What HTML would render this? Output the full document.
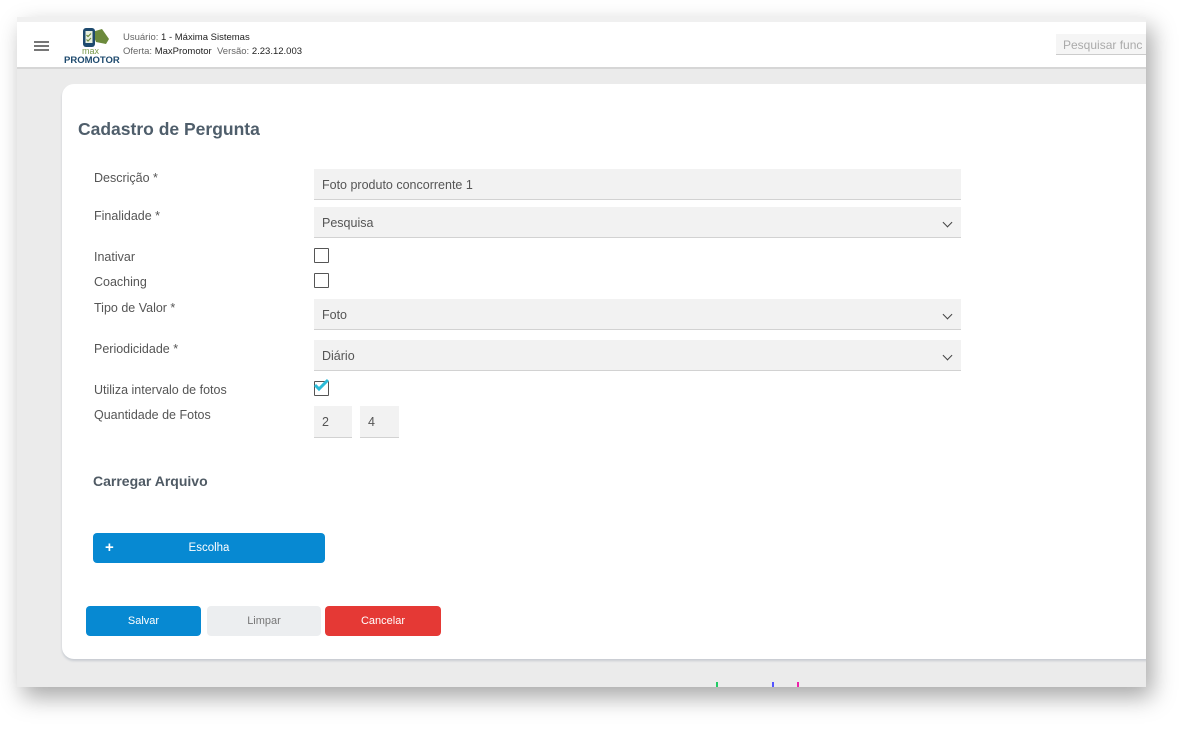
<!DOCTYPE html>
<html><head><meta charset="utf-8"><style>
*{box-sizing:border-box;margin:0;padding:0}
body{width:1196px;height:736px;background:#fff;font-family:"Liberation Sans",sans-serif;position:relative;overflow:hidden}
.shot{position:absolute;left:17px;top:17px;width:1129px;height:670px;background:#ebebeb;box-shadow:6px 10px 22px rgba(0,0,0,.35);overflow:hidden}
.hdr{position:absolute;left:0;top:5px;width:1129px;height:47px;background:#fff;border-bottom:2px solid #d6d6d6}
.topstrip{position:absolute;left:0;top:0;width:1129px;height:5px;background:#f0f0f0}
.card{position:absolute;left:45px;top:67px;width:1100px;height:575px;background:#fff;border-radius:12px;box-shadow:0 2px 2px #c8ccd2}
.abs{position:absolute}
.lbl{position:absolute;left:77px;font-size:12.5px;color:#555}
.inp{position:absolute;left:297px;width:647px;height:31px;background:#f2f2f2;border-bottom:1px solid #d2d2d2;font-size:12.5px;color:#555;padding:9px 0 0 8px}
.chev{position:absolute;right:10px;top:12px;width:7px;height:7px;border-right:1.6px solid #444;border-bottom:1.6px solid #444;transform:rotate(45deg)}
.cb{position:absolute;left:297px;width:15px;height:15px;border:1.6px solid #555;border-radius:1px}
.btn{position:absolute;height:30px;border-radius:4px;font-size:11px;color:#fff;text-align:center;line-height:30px}
</style></head><body>
<div class="shot">
 <div class="topstrip"></div>
 <div class="hdr">
  <div class="abs" style="left:17px;top:19px;width:15px;height:1.5px;background:#777;box-shadow:0 4px 0 #777,0 8px 0 #777"></div>
  <svg class="abs" style="left:63px;top:5px" width="30" height="22" viewBox="0 0 30 22"><path d="M12 5 L22 2 L29 12 L26 17 L16 15Z" fill="#6c8a3c"/><rect x="3" y="1" width="12" height="19" rx="3" fill="#1e4a6e"/><rect x="5.5" y="4" width="7" height="12" fill="#e8f0e0"/><path d="M6.5 8l1.5 1.5 3-3M6.5 12.5l1.5 1.5 3-3" stroke="#6c8a3c" stroke-width="1.2" fill="none"/></svg>
  <div class="abs" style="left:65px;top:24px;font-size:9px;color:#7a9a4a">max</div>
  <div class="abs" style="left:47px;top:33px;font-size:9.5px;font-weight:bold;color:#1e4a6e">PROMOTOR</div>
  <div class="abs" style="left:106px;top:10px;font-size:9.5px;color:#666">Usuário: <span style="color:#222">1 - Máxima Sistemas</span></div>
  <div class="abs" style="left:106px;top:24px;font-size:9.5px;color:#666">Oferta: <span style="color:#222">MaxPromotor</span>&nbsp; Versão: <span style="color:#222">2.23.12.003</span></div>
  <div class="abs" style="left:1039px;top:12px;width:95px;height:21px;background:#f5f5f5;border-bottom:1px solid #ccc;font-size:12px;color:#aaa;padding:4px 0 0 7px;white-space:nowrap">Pesquisar func</div>
 </div>
 <div class="card"></div>
 <div class="abs" style="left:61px;top:102px;font-size:17.5px;font-weight:bold;color:#4f5e6b">Cadastro de Pergunta</div>
 <div class="lbl" style="top:154px">Descrição *</div>
 <div class="inp" style="top:152px">Foto produto concorrente 1</div>
 <div class="lbl" style="top:192px">Finalidade *</div>
 <div class="inp" style="top:190px">Pesquisa<div class="chev"></div></div>
 <div class="lbl" style="top:233px">Inativar</div>
 <div class="cb" style="top:231px"></div>
 <div class="lbl" style="top:258px">Coaching</div>
 <div class="cb" style="top:256px"></div>
 <div class="lbl" style="top:284px">Tipo de Valor *</div>
 <div class="inp" style="top:282px">Foto<div class="chev"></div></div>
 <div class="lbl" style="top:325px">Periodicidade *</div>
 <div class="inp" style="top:323px">Diário<div class="chev"></div></div>
 <div class="lbl" style="top:366px">Utiliza intervalo de fotos</div>
 <div class="cb" style="top:364px"></div>
 <svg class="abs" style="left:296px;top:361px" width="18" height="14"><path d="M2 7l4 4 9-9" stroke="#2bbbd8" stroke-width="3" fill="none"/></svg>
 <div class="lbl" style="top:391px">Quantidade de Fotos</div>
 <div class="inp" style="top:389px;width:38px;height:32px">2</div>
 <div class="inp" style="left:343px;top:389px;width:39px;height:32px">4</div>
 <div class="abs" style="left:76px;top:456px;font-size:14px;font-weight:bold;color:#4f5a64">Carregar Arquivo</div>
 <div class="btn" style="left:76px;top:516px;width:232px;background:#0789d2;font-size:11.5px">Escolha<span style="position:absolute;left:12px;font-size:15px;font-weight:bold">+</span></div>
 <div class="btn" style="left:69px;top:589px;width:115px;background:#0789d2">Salvar</div>
 <div class="btn" style="left:190px;top:589px;width:114px;background:#eceef0;color:#777">Limpar</div>
 <div class="btn" style="left:308px;top:589px;width:116px;background:#e53935">Cancelar</div>
 <div class="abs" style="left:699px;top:665px;width:2px;height:5px;background:#2c6"></div>
 <div class="abs" style="left:755px;top:665px;width:2px;height:5px;background:#55f"></div>
 <div class="abs" style="left:780px;top:665px;width:2px;height:5px;background:#e2a"></div>
</div>
</body></html>
